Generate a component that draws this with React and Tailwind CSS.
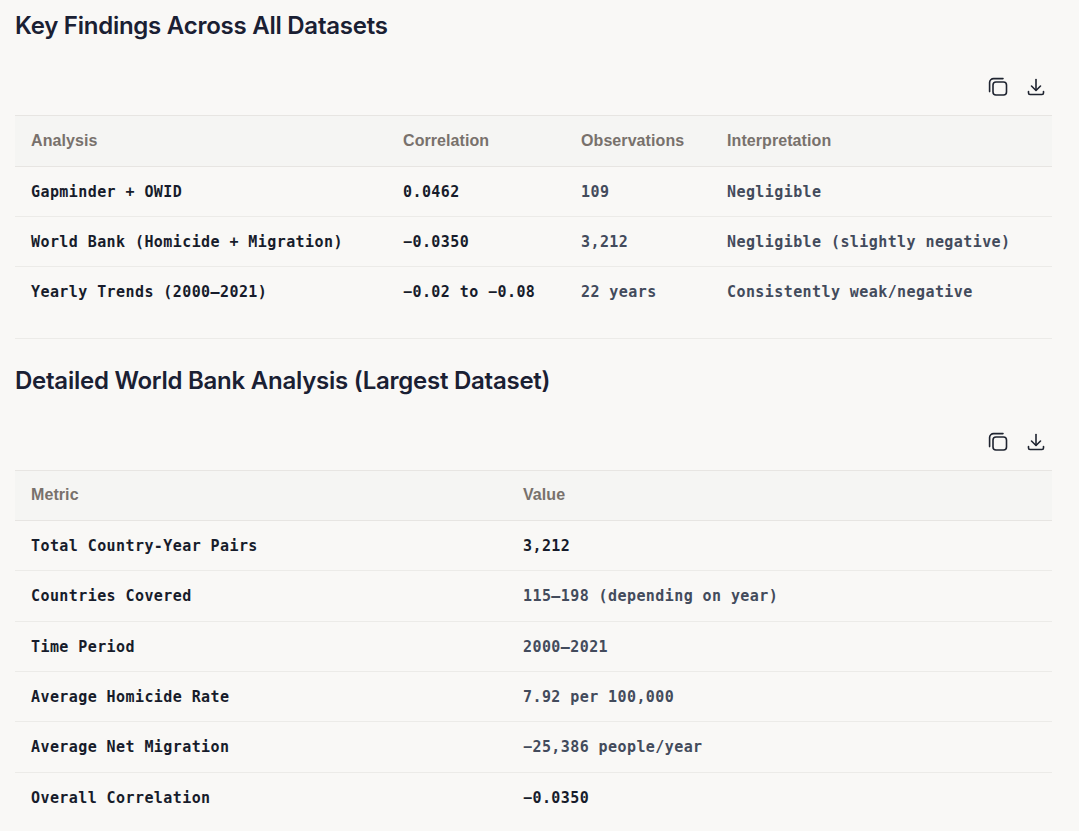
const findings = [
  ['Gapminder + OWID', '0.0462', '109', 'Negligible'],
  ['World Bank (Homicide + Migration)', '−0.0350', '3,212', 'Negligible (slightly negative)'],
  ['Yearly Trends (2000–2021)', '−0.02 to −0.08', '22 years', 'Consistently weak/negative'],
]

const metrics = [
  ['Total Country-Year Pairs', '3,212', true],
  ['Countries Covered', '115–198 (depending on year)'],
  ['Time Period', '2000–2021'],
  ['Average Homicide Rate', '7.92 per 100,000'],
  ['Average Net Migration', '−25,386 people/year'],
  ['Overall Correlation', '−0.0350', true],
]

const CopyIcon = () => (
  <svg width="20" height="20" viewBox="0 0 20 20" fill="none" stroke="currentColor" strokeWidth="1.6">
    <rect x="5" y="5" width="13.5" height="13" rx="3" />
    <path d="M15 1.6H5.6a4 4 0 0 0-4 4v9" strokeLinecap="round" />
  </svg>
)

const DownloadIcon = () => (
  <svg width="20" height="20" viewBox="0 0 20 20" fill="none" stroke="currentColor" strokeWidth="1.6" strokeLinecap="round" strokeLinejoin="round">
    <path d="M10 2.500V13" />
    <path d="M5.500 9l4.500 4.500L14.500 9" />
    <path d="M2.500 14.500V16a1.500 1.500 0 0 0 1.500 1.500h12a1.500 1.500 0 0 0 1.500-1.500v-1.500" />
  </svg>
)

const Toolbar = () => (
  <div className="flex justify-end items-center gap-[18px] h-[24px] pr-[6px] text-[#1f2430]">
    <CopyIcon />
    <DownloadIcon />
  </div>
)

const Th = ({ children, className = 'h-[50.4px]' }) => (
  <th className={`${className} px-4 text-left align-middle text-[16px] tracking-[0.08px] font-bold font-['Liberation_Sans',sans-serif] text-[#78716c]`}>
    {children}
  </th>
)

const Td = ({ children, strong, className = 'h-[50.4px]' }) => (
  <td className={`${className} px-4 pt-[1px] align-middle whitespace-nowrap text-[15px] tracking-[0.42px] font-['DejaVu_Sans_Mono',monospace] font-bold ${strong ? 'text-[#171c2b]' : 'text-[#434b5c]'}`}>
    {children}
  </td>
)

const App = () => {
  return (
    <div className="min-h-[831px] bg-[#f9f8f6] pl-[15px] pr-[27px] overflow-hidden">
      <h2 className="pt-[11px] h-[75px] text-[24px] leading-[30px] font-semibold tracking-[-0.25px] text-[#1a2033] font-['Inter',sans-serif]">
        Key Findings Across All Datasets
      </h2>
      <Toolbar />
      <table className="w-full mt-[16px] border-collapse table-fixed">
        <colgroup>
          <col className="w-[372px]" />
          <col className="w-[178px]" />
          <col className="w-[146px]" />
          <col />
        </colgroup>
        <thead>
          <tr className="bg-[#f5f5f3] border-y border-[#e7e5e2]">
            <Th className="h-[51px]">Analysis</Th>
            <Th className="h-[51px]">Correlation</Th>
            <Th className="h-[51px]">Observations</Th>
            <Th className="h-[51px]">Interpretation</Th>
          </tr>
        </thead>
        <tbody>
          {findings.map(row => (
            <tr key={row[0]} className="border-b border-[#ecebe8] last:border-b-0">
              <Td strong className="h-[50px]">{row[0]}</Td>
              <Td strong className="h-[50px]">{row[1]}</Td>
              <Td className="h-[50px]">{row[2]}</Td>
              <Td className="h-[50px]">{row[3]}</Td>
            </tr>
          ))}
        </tbody>
      </table>
      <hr className="mt-[21px] border-[#ecebe8]" />
      <h2 className="pt-[27px] h-[91px] text-[24px] leading-[30px] font-semibold tracking-[-0.25px] text-[#1a2033] font-['Inter',sans-serif]">
        Detailed World Bank Analysis (Largest Dataset)
      </h2>
      <Toolbar />
      <table className="w-full mt-[16px] border-collapse table-fixed">
        <colgroup>
          <col className="w-[492px]" />
          <col />
        </colgroup>
        <thead>
          <tr className="bg-[#f5f5f3] border-y border-[#e7e5e2]">
            <Th>Metric</Th>
            <Th>Value</Th>
          </tr>
        </thead>
        <tbody>
          {metrics.map(([name, value, strong]) => (
            <tr key={name} className="border-b border-[#ecebe8] last:border-b-0">
              <Td strong>{name}</Td>
              <Td strong={strong}>{value}</Td>
            </tr>
          ))}
        </tbody>
      </table>
    </div>
  )
}

export default App
